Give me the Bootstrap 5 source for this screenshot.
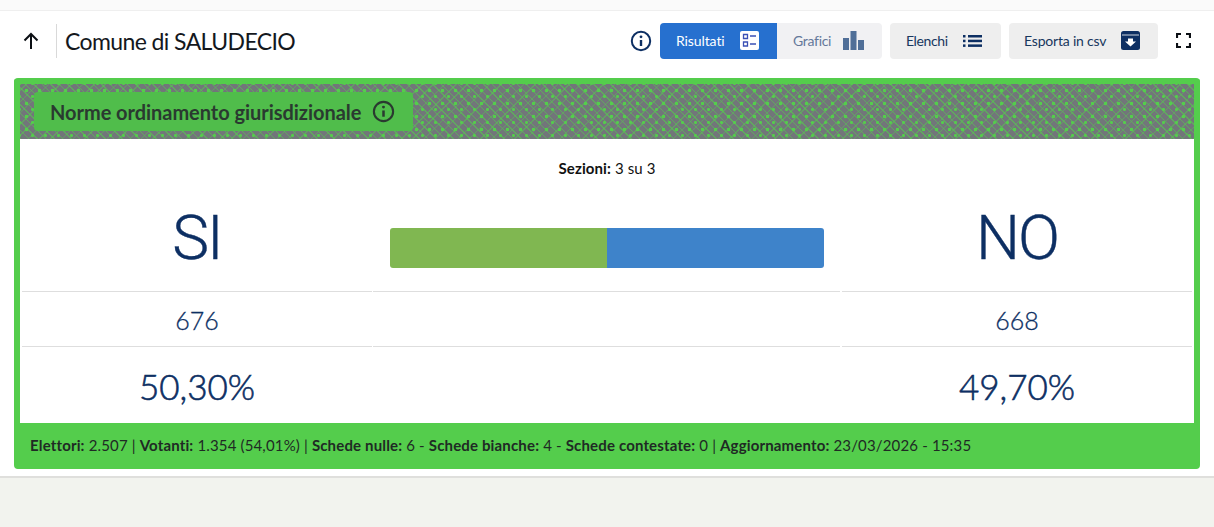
<!DOCTYPE html>
<html lang="it">
<head>
    <meta charset="UTF-8">
    <meta name="viewport" content="width=device-width, initial-scale=1.0">
    <title>Comune di SALUDECIO</title>
    <link href="https://cdn.jsdelivr.net/npm/bootstrap@5.3.0/dist/css/bootstrap.min.css" rel="stylesheet">
    <style>
        body { font-family: Lato, "Open Sans", sans-serif; background: #f2f3ee; color: #1c2024; height: 527px; overflow: hidden; }
        .page-wrap { background: #fff; height: 478px; border-bottom: 2px solid #dfdfdc; }
        .top-strip { height: 11px; background: #fafafa; border-bottom: 1px solid #efefef; }
        .head-bar { height: 67px; padding: 0 23px 8px 21px; }
        .back-btn { width: 36px; height: 34px; border-right: 1px solid #d9d9d9; }
        .page-title { font-size: 23px; line-height: 34px; margin: 0 0 0 8px; font-weight: 400; color: #14181d; letter-spacing: -.6px; }
        .tool-btn { height: 36px; display: flex; align-items: center; font-size: 14px; background: #eeeeee; color: #17375e; border-radius: 4px; border: 0; padding: 0; letter-spacing: -.1px; }
        .tool-btn.is-on { background: #2670cf; color: #fff; width: 117px; padding-left: 16px; gap: 15px; border-radius: 4px 0 0 4px; }
        .tool-btn.is-off { background: #f1f1f3; color: #64789a; width: 105px; padding-left: 16px; gap: 12px; border-radius: 0 4px 4px 0; letter-spacing: -.3px; }
        .btn-elenchi { width: 111px; padding-left: 16px; gap: 15px; margin-left: 8px; letter-spacing: -.4px !important; }
        .btn-csv { width: 149px; padding-left: 15px; gap: 15px; margin-left: 8px; letter-spacing: -.2px !important; }
        .info-ico { margin-right: 8px; }
        .full-ico { margin-left: 18px; }
        .result-box { margin: 0 14px; border: 6px solid #54cd4c; border-bottom: 0; border-radius: 4px; height: 391px; background: #54cd4c; }
        .hatch-head { height: 55px; padding: 8px 14px; background-color: #72767a;
            background-image:
                radial-gradient(circle, #54cd4c 1.5px, transparent 2.1px),
                radial-gradient(circle, #54cd4c 1.2px, transparent 1.8px),
                repeating-linear-gradient(45deg, rgba(84,205,76,.55) 0 1px, transparent 1px 6px),
                repeating-linear-gradient(-45deg, rgba(84,205,76,.45) 0 1px, transparent 1px 8px);
            background-size: 13px 13px, 13px 13px, auto, auto;
            background-position: 0 0, 6px 6px, 0 0, 0 0; }
        .title-pill { width: 379px; height: 39px; background: #50bd4b; border-radius: 4px; padding: 0 16px; display: flex; align-items: center; gap: 11px; font-size: 20px; font-weight: 700; color: #2a3a30; white-space: nowrap; letter-spacing: -.04px; }
        .result-body { background: #fff; height: 284px; padding: 0 2px; }
        .sez-line { font-size: 15px; height: 58px; padding-top: 19px; line-height: 20px; text-align: center; color: #111; letter-spacing: .1px; }
        .res-col-side { width: 350px; flex: none; text-align: center; color: #0d2f63; }
        .res-col-mid { flex: 1; margin: 0 2px 0 1px; }
        .big-cell { height: 95px; font-family: Roboto, sans-serif; font-weight: 300; font-size: 62px; line-height: 82px; border-bottom: 1px solid #dedede; letter-spacing: -2px; -webkit-text-stroke: .4px #0d2f63; }
        .num-cell { height: 55px; font-size: 25px; line-height: 56px; border-bottom: 1px solid #dedede; font-weight: 300; -webkit-text-stroke: .3px #0d2f63; }
        .pct-cell { height: 76px; font-size: 35px; line-height: 78px; font-weight: 300; -webkit-text-stroke: .6px #0d2f63; }
        .mid-big { height: 95px; border-bottom: 1px solid #dedede; padding: 31px 16px 0 17px; }
        .mid-num { height: 55px; border-bottom: 1px solid #dedede; }
        .vote-bar { height: 40px; border-radius: 3px; overflow: hidden; display: flex; }
        .vote-si { background: #80b751; }
        .vote-no { background: #3e83ca; }
        .foot-line { height: 46px; line-height: 45px; padding-left: 10px; font-size: 15px; color: #1f2a24; white-space: nowrap; letter-spacing: .155px; }
        .foot-line b { font-weight: 700; }
    </style>
</head>
<body>
    <div class="page-wrap">
        <div class="top-strip"></div>
        <div class="head-bar d-flex align-items-center">
            <div class="back-btn d-flex align-items-center">
                <svg width="20" height="20" viewBox="0 0 20 20" fill="none" stroke="#0b0f14" stroke-width="2"><path d="M10 18V3M3.5 9.5 10 3l6.500 6.500"/></svg>
            </div>
            <h1 class="page-title">Comune di SALUDECIO</h1>
            <div class="ms-auto d-flex align-items-center">
                <svg class="info-ico" width="22" height="22" viewBox="0 0 22 22" fill="none" stroke="#0d2f63" stroke-width="2"><circle cx="11" cy="11" r="9.200"/><path d="M11 10v6" stroke-width="2.400"/><circle cx="11" cy="6.800" r="1.400" fill="#0d2f63" stroke="none"/></svg>
                <button class="tool-btn is-on" type="button">Risultati
                    <svg width="19" height="19" viewBox="0 0 19 19"><rect width="19" height="19" rx="2" fill="#fff"/><path d="M3.500 3.500h4v4h-4zM3.500 11h4v4h-4z" fill="none" stroke="#3a50b5" stroke-width="1.300"/><path d="M10 5h6M10 13h6" stroke="#3a50b5" stroke-width="1.600"/></svg>
                </button>
                <button class="tool-btn is-off" type="button">Grafici
                    <svg width="21" height="19" viewBox="0 0 21 19" fill="#506f98"><rect y="7" width="6" height="12"/><rect x="7.500" width="6" height="19"/><rect x="15" y="9" width="6" height="10"/></svg>
                </button>
                <button class="tool-btn btn-elenchi" type="button">Elenchi
                    <svg width="19" height="12" viewBox="0 0 19 12" fill="#0d2f63"><rect width="2.500" height="2.500"/><rect y="4.700" width="2.500" height="2.500"/><rect y="9.400" width="2.500" height="2.500"/><rect x="5" width="14" height="2.500"/><rect x="5" y="4.700" width="14" height="2.500"/><rect x="5" y="9.400" width="14" height="2.500"/></svg>
                </button>
                <button class="tool-btn btn-csv" type="button">Esporta in csv
                    <svg width="19" height="19" viewBox="0 0 19 19"><rect width="19" height="19" rx="2.500" fill="#0d2f63"/><path d="M1 4h17" stroke="#fff" stroke-width=".8"/><path d="M7 7.500h5v3h3l-5.500 5-5.500-5h3z" fill="#fff"/></svg>
                </button>
                <svg class="full-ico" width="15" height="15" viewBox="0 0 15 15" fill="none" stroke="#0b0f14" stroke-width="2.200"><path d="M1 5V1h4M10 1h4v4M14 10v4h-4M5 14H1v-4"/></svg>
            </div>
        </div>
        <div class="result-box">
            <div class="hatch-head">
                <div class="title-pill">Norme ordinamento giurisdizionale
                    <svg width="23" height="23" viewBox="0 0 22 22" fill="none" stroke="#2a3a30" stroke-width="2"><circle cx="11" cy="11" r="9.200"/><path d="M11 10v6" stroke-width="2.400"/><circle cx="11" cy="6.800" r="1.400" fill="#2a3a30" stroke="none"/></svg>
                </div>
            </div>
            <div class="result-body">
                <div class="sez-line"><b>Sezioni:</b> 3 su 3</div>
                <div class="d-flex">
                    <div class="res-col-side">
                        <div class="big-cell">SI</div>
                        <div class="num-cell">676</div>
                        <div class="pct-cell">50,30%</div>
                    </div>
                    <div class="res-col-mid">
                        <div class="mid-big">
                            <div class="vote-bar">
                                <div class="vote-si" style="width: 50%"></div>
                                <div class="vote-no" style="width: 50%"></div>
                            </div>
                        </div>
                        <div class="mid-num"></div>
                    </div>
                    <div class="res-col-side">
                        <div class="big-cell">NO</div>
                        <div class="num-cell">668</div>
                        <div class="pct-cell">49,70%</div>
                    </div>
                </div>
            </div>
            <div class="foot-line"><b>Elettori:</b> 2.507 | <b>Votanti:</b> 1.354 (54,01%) | <b>Schede nulle:</b> 6 - <b>Schede bianche:</b> 4 - <b>Schede contestate:</b> 0 | <b>Aggiornamento:</b> 23/03/2026 - 15:35</div>
        </div>
    </div>
    <script src="https://cdn.jsdelivr.net/npm/bootstrap@5.3.0/dist/js/bootstrap.bundle.min.js"></script>
</body>
</html>
